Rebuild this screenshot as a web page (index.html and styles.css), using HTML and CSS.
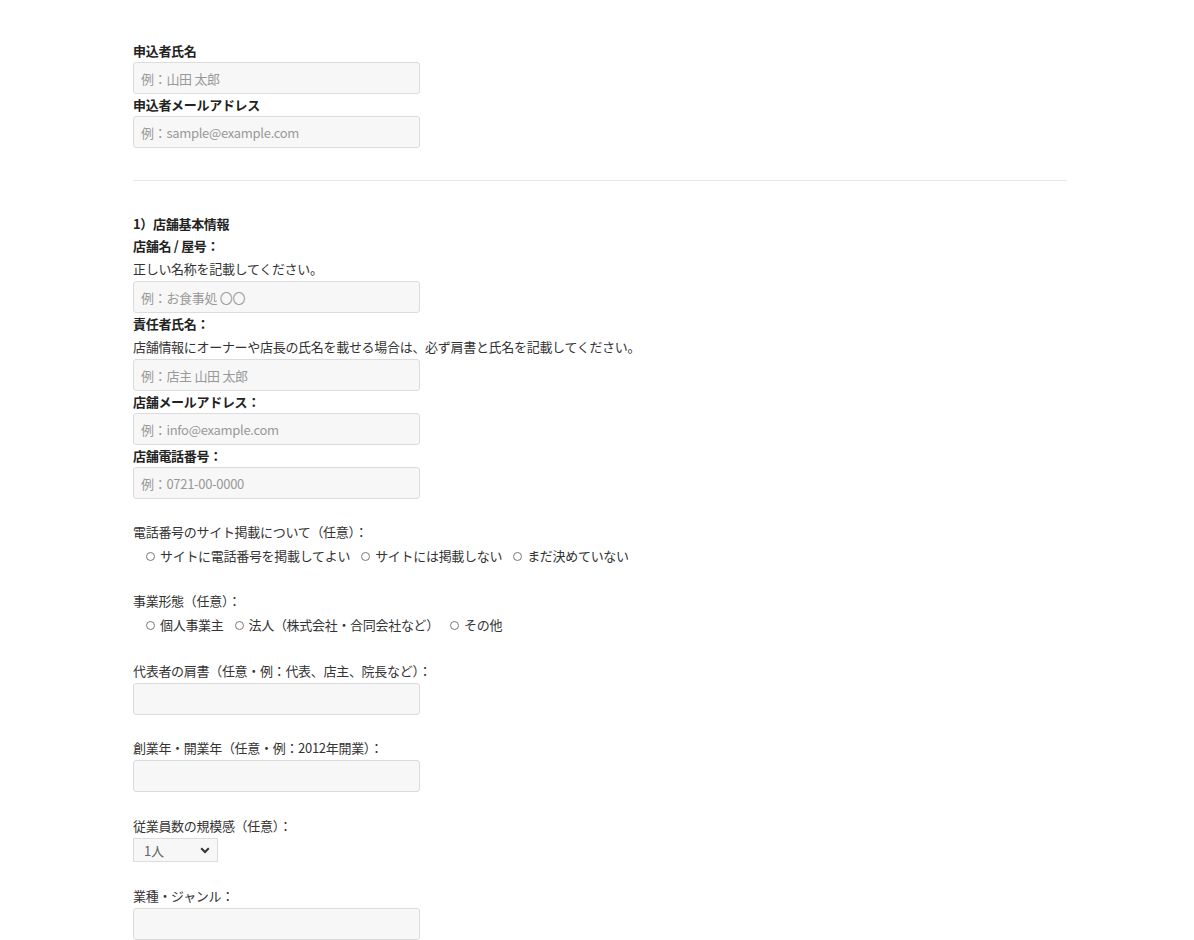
FILE: index.html
```html
<!DOCTYPE html>
<html lang="ja">
<head>
<meta charset="utf-8">
<title>申込フォーム</title>
<link rel="stylesheet" href="styles.css">
</head>
<body>
<div class="form">
  <div class="lbl">申込者氏名</div>
  <div class="input"><span class="ph">例：山田 太郎</span></div>
  <div class="lbl">申込者メールアドレス</div>
  <div class="input"><span class="ph">例：sample@example.com</span></div>

  <div class="sep"></div>

  <div class="lbl">1）店舗基本情報</div>
  <div class="lbl">店舗名 / 屋号：</div>
  <div class="desc">正しい名称を記載してください。</div>
  <div class="input"><span class="ph">例：お食事処 〇〇</span></div>
  <div class="lbl">責任者氏名：</div>
  <div class="desc">店舗情報にオーナーや店長の氏名を載せる場合は、必ず肩書と氏名を記載してください。</div>
  <div class="input"><span class="ph">例：店主 山田 太郎</span></div>
  <div class="lbl">店舗メールアドレス：</div>
  <div class="input"><span class="ph">例：info@example.com</span></div>
  <div class="lbl">店舗電話番号：</div>
  <div class="input"><span class="ph">例：0721-00-0000</span></div>

  <div class="opt">
    <div class="olbl">電話番号のサイト掲載について（任意）：</div>
    <div class="radios">
      <span class="radio"><span class="dot"></span>サイトに電話番号を掲載してよい</span>
      <span class="radio"><span class="dot"></span>サイトには掲載しない</span>
      <span class="radio"><span class="dot"></span>まだ決めていない</span>
    </div>
  </div>

  <div class="opt">
    <div class="olbl">事業形態（任意）：</div>
    <div class="radios">
      <span class="radio"><span class="dot"></span>個人事業主</span>
      <span class="radio"><span class="dot"></span>法人（株式会社・合同会社など）</span>
      <span class="radio"><span class="dot"></span>その他</span>
    </div>
  </div>

  <div class="opt opt-wide">
    <div class="olbl">代表者の肩書（任意・例：代表、店主、院長など）：</div>
    <div class="input"></div>
  </div>

  <div class="opt">
    <div class="olbl">創業年・開業年（任意・例：2012年開業）：</div>
    <div class="input"></div>
  </div>

  <div class="opt opt-wide">
    <div class="olbl">従業員数の規模感（任意）：</div>
    <div class="select"><span class="sel-text">1人</span><svg class="chev" width="10" height="7" viewBox="0 0 10 7"><path d="M1.2 1.3 L5 5 L8.8 1.3" fill="none" stroke="#333" stroke-width="2"/></svg></div>
  </div>

  <div class="opt opt-wide">
    <div class="olbl">業種・ジャンル：</div>
    <div class="input"></div>
  </div>
</div>
</body>
</html>
```
FILE: styles.css
```css
html, body {
  margin: 0;
  padding: 0;
  background: #fff;
}
body {
  font-family: "Noto Sans CJK JP", "Noto Sans", sans-serif;
  font-size: 13px;
  color: #333;
  letter-spacing: -0.3px;
}
.form {
  width: 934px;
  margin-left: 133px;
  padding-top: 40px;
}
.lbl {
  font-weight: bold;
  line-height: 22px;
  color: #222;
}
.desc {
  line-height: 24px;
}
.input {
  box-sizing: border-box;
  width: 287px;
  height: 32px;
  background: #f7f7f7;
  border: 1px solid #dcdcdc;
  border-radius: 3px;
  padding: 0 7px;
  display: flex;
  align-items: center;
}
.ph {
  color: #999;
}
.sep {
  border-top: 1px solid #e6e6e6;
  margin: 32px 0 32px;
}
.opt {
  margin-top: 21px;
}
.opt-wide {
  margin-top: 22px;
}
.olbl {
  line-height: 24px;
}
.radios {
  line-height: 24px;
  padding-left: 13px;
  display: flex;
  gap: 11px;
}
.radio {
  display: inline-flex;
  align-items: center;
}
.dot {
  box-sizing: border-box;
  width: 9px;
  height: 9px;
  border: 1px solid #777;
  border-radius: 50%;
  margin-right: 5px;
}
.select {
  box-sizing: border-box;
  width: 85px;
  height: 24px;
  background: #f7f7f7;
  border: 1px solid #dcdcdc;
  display: flex;
  align-items: center;
  justify-content: space-between;
  padding: 0 7px 0 10px;
}
.sel-text {
  color: #666;
}
.chev {
  display: block;
}
```
